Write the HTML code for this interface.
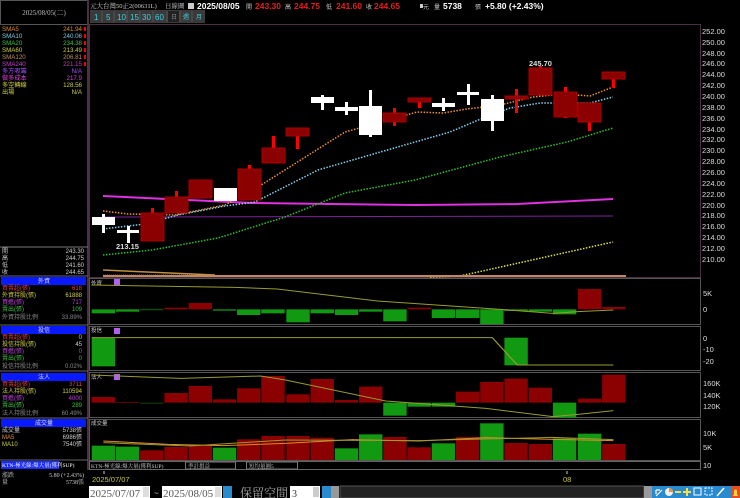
<!DOCTYPE html>
<html><head><meta charset="utf-8"><style>
html,body{margin:0;padding:0;background:#000;width:740px;height:498px;overflow:hidden}
svg{display:block}
text{font-family:"Liberation Sans","Noto Sans CJK TC",sans-serif}
.s{font-family:"Liberation Serif","Noto Serif CJK SC",serif}
</style></head><body>
<svg width="740" height="498" viewBox="0 0 740 498" xmlns="http://www.w3.org/2000/svg">
<rect width="740" height="498" fill="#000"/>
<rect x="0.5" y="0.5" width="87" height="24" fill="#000" stroke="#555"/>
<text x="44" y="15" font-size="7" fill="#bbb" text-anchor="middle" class="s">2025/08/05(二)</text>
<line x1="88" y1="0" x2="88" y2="470" stroke="#4a3040" stroke-width="2"/>
<g font-size="6.2" class="s">
<text x="2" y="31" fill="#e08a2a">SMA5</text><text x="82" y="31" fill="#e08a2a" text-anchor="end">241.94</text>
<text x="2" y="38" fill="#80c8e8">SMA10</text><text x="82" y="38" fill="#80c8e8" text-anchor="end">240.06</text>
<text x="2" y="45" fill="#40c040">SMA20</text><text x="82" y="45" fill="#40c040" text-anchor="end">234.38</text>
<text x="2" y="52" fill="#d0d040">SMA60</text><text x="82" y="52" fill="#d0d040" text-anchor="end">213.49</text>
<text x="2" y="59" fill="#c09060">SMA120</text><text x="82" y="59" fill="#c09060" text-anchor="end">206.81</text>
<text x="2" y="66" fill="#c040c0">SMA240</text><text x="82" y="66" fill="#c040c0" text-anchor="end">221.15</text>
<text x="2" y="73" fill="#a050ff">多方吸籌</text><text x="82" y="73" fill="#a050ff" text-anchor="end">N/A</text>
<text x="2" y="80" fill="#e040e0">做多成本</text><text x="82" y="80" fill="#e040e0" text-anchor="end">217.9</text>
<text x="2" y="87" fill="#d0d040">多空轉線</text><text x="82" y="87" fill="#d0d040" text-anchor="end">128.56</text>
<text x="2" y="94" fill="#d0d040">出場</text><text x="82" y="94" fill="#d0d040" text-anchor="end">N/A</text>
</g>
<g fill="#e00"><rect x="84" y="27" width="2" height="4"/><rect x="84" y="34" width="2" height="4"/><rect x="84" y="41" width="2" height="4"/><rect x="84" y="48" width="2" height="4"/><rect x="84" y="55" width="2" height="4"/><rect x="84" y="62" width="2" height="4"/></g>
<line x1="0" y1="247" x2="88" y2="247" stroke="#777"/>
<g font-size="6" fill="#ccc" class="s">
<text x="2" y="253">開</text><text x="84" y="253" text-anchor="end">243.30</text>
<text x="2" y="260">高</text><text x="84" y="260" text-anchor="end">244.75</text>
<text x="2" y="267">低</text><text x="84" y="267" text-anchor="end">241.60</text>
<text x="2" y="274">收</text><text x="84" y="274" text-anchor="end">244.65</text>
</g>
<g font-size="6" class="s">
<rect x="1" y="277" width="85" height="8" fill="#0a1aff"/><text x="44" y="283" fill="#ddd" text-anchor="middle">外資</text>
<text x="2" y="290" fill="#e04040">買賣超(張)</text><text x="82" y="290" fill="#e04040" text-anchor="end">618</text>
<text x="2" y="297" fill="#d0d040">外資持股(張)</text><text x="82" y="297" fill="#d0d040" text-anchor="end">61888</text>
<text x="2" y="304" fill="#c040e0">買進(張)</text><text x="82" y="304" fill="#c040e0" text-anchor="end">717</text>
<text x="2" y="311" fill="#40c040">賣出(張)</text><text x="82" y="311" fill="#40c040" text-anchor="end">109</text>
<text x="2" y="319" fill="#888">外資持股比例</text><text x="82" y="319" fill="#888" text-anchor="end">33.89%</text>
<rect x="1" y="326" width="85" height="8" fill="#0a1aff"/><text x="44" y="332" fill="#ddd" text-anchor="middle">投信</text>
<text x="2" y="339" fill="#e04040">買賣超(張)</text><text x="82" y="339" fill="#ccc" text-anchor="end">0</text>
<text x="2" y="346" fill="#d0d040">投信持股(張)</text><text x="82" y="346" fill="#ccc" text-anchor="end">45</text>
<text x="2" y="353" fill="#c040e0">買進(張)</text><text x="82" y="353" fill="#c040e0" text-anchor="end">0</text>
<text x="2" y="360" fill="#40c040">賣出(張)</text><text x="82" y="360" fill="#40c040" text-anchor="end">0</text>
<text x="2" y="368" fill="#888">投信持股比例</text><text x="82" y="368" fill="#888" text-anchor="end">0.02%</text>
<rect x="1" y="373" width="85" height="8" fill="#0a1aff"/><text x="44" y="379" fill="#ddd" text-anchor="middle">法人</text>
<text x="2" y="386" fill="#e04040">買賣超(張)</text><text x="82" y="386" fill="#e04040" text-anchor="end">3711</text>
<text x="2" y="393" fill="#d0d040">法人持股(張)</text><text x="82" y="393" fill="#d0d040" text-anchor="end">110594</text>
<text x="2" y="400" fill="#c040e0">買進(張)</text><text x="82" y="400" fill="#c040e0" text-anchor="end">4000</text>
<text x="2" y="407" fill="#40c040">賣出(張)</text><text x="82" y="407" fill="#40c040" text-anchor="end">289</text>
<text x="2" y="415" fill="#888">法人持股比例</text><text x="82" y="415" fill="#888" text-anchor="end">60.49%</text>
<rect x="1" y="419" width="85" height="8" fill="#0a1aff"/><text x="44" y="425" fill="#ddd" text-anchor="middle">成交量</text>
<text x="2" y="432" fill="#ccc">成交量</text><text x="82" y="432" fill="#ccc" text-anchor="end">5738張</text>
<text x="2" y="439" fill="#e08a2a">MA5</text><text x="82" y="439" fill="#ccc" text-anchor="end">6986張</text>
<text x="2" y="446" fill="#d0d040">MA10</text><text x="82" y="446" fill="#ccc" text-anchor="end">7540張</text>
</g>
<line x1="0" y1="276" x2="88" y2="276" stroke="#666"/>
<line x1="0" y1="325" x2="88" y2="325" stroke="#666"/>
<line x1="0" y1="371" x2="88" y2="371" stroke="#666"/>
<line x1="0" y1="418" x2="88" y2="418" stroke="#666"/>
<line x1="0" y1="460" x2="88" y2="460" stroke="#666"/>
<rect x="1" y="461" width="58" height="8" fill="#1a2aff"/>
<text x="2" y="467" font-size="5.5" fill="#fff" class="s">KTN-極光線:爆大量(獲利SUP)</text>
<text x="2" y="477" font-size="6" fill="#ccc" class="s">漲跌</text><text x="84" y="477" font-size="6" fill="#ccc" text-anchor="end" class="s">5.80 (+2.43%)</text>
<text x="2" y="484" font-size="6" fill="#ccc" class="s">量</text><text x="84" y="484" font-size="6" fill="#ccc" text-anchor="end" class="s">5738張</text>

<text x="90" y="8" font-size="6.5" fill="#ccc" class="s">元大台灣50正2(00631L)</text>
<text x="165" y="8" font-size="6.5" fill="#ccc" class="s">日線圖</text>
<rect x="188" y="3" width="6" height="6" fill="#ccc"/>
<g font-size="8.5" font-weight="bold">
<text x="197" y="9" fill="#fff">2025/08/05</text>
<text x="246" y="9" font-size="6" fill="#ccc" font-weight="normal">開</text><text x="255" y="9" fill="#e02020">243.30</text>
<text x="285" y="9" font-size="6" fill="#ccc" font-weight="normal">高</text><text x="294" y="9" fill="#e02020">244.75</text>
<text x="326" y="9" font-size="6" fill="#ccc" font-weight="normal">低</text><text x="336" y="9" fill="#e02020">241.60</text>
<text x="366" y="9" font-size="6" fill="#ccc" font-weight="normal">收</text><text x="374" y="9" fill="#e02020">244.65</text>
<text x="423" y="9" font-size="6" fill="#ccc" font-weight="normal">元</text>
<text x="434" y="9" font-size="6" fill="#ccc" font-weight="normal">量</text><text x="443" y="9" fill="#fff">5738</text>
<text x="475" y="9" font-size="6" fill="#ccc" font-weight="normal">張</text>
<text x="485" y="9" fill="#fff">+5.80 (+2.43%)</text>
</g>
<rect x="420" y="4" width="3" height="4" fill="#ccc"/>
<rect x="90" y="10" width="115" height="13" fill="#3a3a3a"/>
<g font-size="8" fill="#40d0e0">
<text x="94" y="20">1</text><text x="106" y="20">5</text><text x="117" y="20">10</text><text x="130" y="20">15</text><text x="142" y="20">30</text><text x="155" y="20">60</text>
</g>
<rect x="168" y="11" width="11" height="11" fill="#222"/>
<text x="171" y="19" font-size="6" fill="#888">日</text><text x="183" y="19" font-size="6" fill="#40d0e0">週</text><text x="196" y="19" font-size="6" fill="#40d0e0">月</text>
<g stroke="#555"><line x1="102" y1="11" x2="102" y2="22"/><line x1="114" y1="11" x2="114" y2="22"/><line x1="127" y1="11" x2="127" y2="22"/><line x1="140" y1="11" x2="140" y2="22"/><line x1="153" y1="11" x2="153" y2="22"/><line x1="167" y1="11" x2="167" y2="22"/><line x1="180" y1="11" x2="180" y2="22"/><line x1="192" y1="11" x2="192" y2="22"/></g>

<rect x="89.5" y="24.5" width="611" height="253" fill="none" stroke="#4a3040"/>
<g font-size="7.5" fill="#ddd">
<text x="702" y="34">252.00</text><text x="702" y="45">250.00</text><text x="702" y="56">248.00</text><text x="702" y="66">246.00</text><text x="702" y="77">244.00</text><text x="702" y="88">242.00</text><text x="702" y="99">240.00</text><text x="702" y="110">238.00</text><text x="702" y="121">236.00</text><text x="702" y="132">234.00</text><text x="702" y="142">232.00</text><text x="702" y="153">230.00</text><text x="702" y="164">228.00</text><text x="702" y="175">226.00</text><text x="702" y="186">224.00</text><text x="702" y="197">222.00</text><text x="702" y="208">220.00</text><text x="702" y="218">218.00</text><text x="702" y="229">216.00</text><text x="702" y="240">214.00</text><text x="702" y="251">212.00</text><text x="702" y="262">210.00</text>
</g>
<line x1="103" y1="217" x2="613" y2="216" stroke="#8020a0" stroke-width="1"/>
<polyline points="103,196 252,203 415,205 517,204 613,199" fill="none" stroke="#e030e0" stroke-width="2"/>
<polyline points="103,255 152,250 218,238 285,217 345,193 415,180 500,157 567,142 613,128" fill="none" stroke="#30c030" stroke-width="1.5" stroke-dasharray="1.5,1.5"/>
<polyline points="103,229 145,224 178,215 225,206 255,202 318,170 415,142 450,132 483,118 510,108 540,103 590,103 613,97" fill="none" stroke="#80d0f0" stroke-width="1.5" stroke-dasharray="1.5,1.5"/>
<polyline points="103,211 128,214 175,215 225,205 258,187 345,132 417,112 443,113 467,109 500,105 533,97 563,94 590,96 613,87" fill="none" stroke="#f09030" stroke-width="1.5" stroke-dasharray="1.5,1.5"/>
<polyline points="430,277 460,276 613,242" fill="none" stroke="#e0e040" stroke-width="1.5" stroke-dasharray="1.5,1.5"/>
<polyline points="103,270 215,275" fill="none" stroke="#c09040" stroke-width="1.5"/>
<line x1="103" y1="275.5" x2="200" y2="275.5" stroke="#e0c040" stroke-width="1.5" stroke-dasharray="1,1"/>
<line x1="103" y1="276" x2="626" y2="276" stroke="#c08860" stroke-width="2"/>
<g>
<g fill="#f00">
<rect x="151" y="208" width="3" height="5"/><rect x="175" y="191" width="3" height="6"/><rect x="248" y="165" width="3" height="4"/><rect x="272" y="136" width="3" height="12"/><rect x="296" y="136" width="3" height="13"/><rect x="393" y="108" width="3" height="18"/><rect x="418" y="98" width="3" height="10"/><rect x="515" y="89" width="3" height="24"/><rect x="539" y="66" width="3" height="3"/><rect x="564" y="87" width="3" height="31"/><rect x="588" y="122" width="3" height="9"/><rect x="612" y="79" width="3" height="9"/>
</g>
<g fill="#8b0000" stroke="#a00" stroke-width="1">
<rect x="141" y="213" width="23" height="28"/><rect x="165" y="197" width="23" height="16"/><rect x="189" y="180" width="23" height="18"/><rect x="238" y="169" width="23" height="31"/><rect x="262" y="148" width="23" height="15"/><rect x="286" y="128" width="23" height="8"/><rect x="383" y="113" width="23" height="9"/><rect x="408" y="98" width="23" height="4"/><rect x="505" y="96" width="23" height="3"/><rect x="529" y="68" width="23" height="27"/><rect x="554" y="92" width="23" height="25"/><rect x="578" y="103" width="23" height="19"/><rect x="602" y="72" width="23" height="7"/>
</g>
<g fill="#fff">
<rect x="102" y="214" width="3" height="19"/><rect x="92" y="217" width="23" height="8"/>
<rect x="127" y="226" width="3" height="17"/><rect x="117" y="230" width="22" height="3"/>
<rect x="214" y="188" width="23" height="13"/>
<rect x="321" y="95" width="3" height="15"/><rect x="311" y="97" width="23" height="6"/>
<rect x="345" y="102" width="3" height="13"/><rect x="335" y="107" width="23" height="4"/>
<rect x="369" y="90" width="3" height="47"/><rect x="359" y="106" width="23" height="29"/>
<rect x="442" y="98" width="3" height="13"/><rect x="432" y="103" width="23" height="4"/>
<rect x="467" y="84" width="3" height="21"/><rect x="457" y="92" width="22" height="3"/>
<rect x="491" y="95" width="3" height="36"/><rect x="481" y="99" width="23" height="22"/>
</g>
</g>
<text x="116" y="249" font-size="7.5" fill="#ddd" font-weight="bold">213.15</text>
<text x="529" y="66" font-size="7.5" fill="#ddd" font-weight="bold">245.70</text>

<g fill="none" stroke="#555">
<rect x="89.5" y="278.5" width="611" height="46"/>
<rect x="89.5" y="326.5" width="611" height="44"/>
<rect x="89.5" y="372.5" width="611" height="45"/>
<rect x="89.5" y="419.5" width="611" height="41"/>
</g>
<g font-size="5.5" fill="#ccc" class="s"><text x="91" y="285">外資</text><text x="91" y="332">投信</text><text x="91" y="379">法人</text><text x="91" y="425">成交量</text></g>
<g fill="#b060f0"><rect x="114" y="279" width="6" height="6"/><rect x="114" y="328" width="6" height="6"/><rect x="114" y="374" width="6" height="6"/></g>
<g font-size="7.5" fill="#ddd">
<text x="703" y="296">5K</text><text x="703" y="312">0</text>
<text x="703" y="341">0</text><text x="703" y="352">-10</text><text x="703" y="364">-20</text>
<text x="703" y="386">160K</text><text x="703" y="398">140K</text><text x="703" y="409">120K</text>
<text x="703" y="436">10K</text><text x="703" y="450">5K</text>
<text x="703" y="468">10</text>
</g>
<g transform="translate(85,275) scale(0.41773,0.33333)">
<g fill="#119911">
<rect x="16" y="103" width="56" height="12"/><rect x="74" y="103" width="56" height="7"/><rect x="306" y="103" width="56" height="4"/><rect x="364" y="103" width="56" height="17"/><rect x="422" y="103" width="56" height="12"/><rect x="482" y="103" width="56" height="39"/><rect x="540" y="103" width="56" height="12"/><rect x="598" y="103" width="56" height="17"/><rect x="656" y="103" width="56" height="7"/><rect x="714" y="103" width="56" height="36"/><rect x="830" y="103" width="56" height="26"/><rect x="888" y="103" width="56" height="26"/><rect x="946" y="103" width="56" height="44"/><rect x="1004" y="103" width="56" height="5"/><rect x="1062" y="103" width="56" height="7"/><rect x="1120" y="103" width="56" height="15"/>
</g>
<rect x="132" y="101" width="56" height="5" fill="#114411"/>
<g fill="#8b0000"><rect x="190" y="98" width="56" height="5"/><rect x="248" y="84" width="56" height="19"/><rect x="772" y="98" width="56" height="5"/><rect x="1180" y="42" width="56" height="61"/><rect x="1238" y="96" width="56" height="7"/></g>
<polyline points="16,30 360,37 460,42 700,78 960,100 1120,115 1180,110 1265,105" fill="none" stroke="#9a9a30" stroke-width="3"/>
<rect x="16" y="188" width="56" height="86" fill="#119911"/>
<rect x="1004" y="188" width="56" height="83" fill="#119911"/>
<polyline points="16,188 975,188 1035,270 1265,270" fill="none" stroke="#9a9a30" stroke-width="3"/>
<g fill="#8b0000"><rect x="16" y="366" width="56" height="17"/><rect x="74" y="381" width="56" height="2"/><rect x="190" y="354" width="56" height="29"/><rect x="248" y="333" width="56" height="50"/><rect x="306" y="373" width="56" height="10"/><rect x="364" y="340" width="56" height="43"/><rect x="422" y="303" width="56" height="80"/><rect x="482" y="358" width="56" height="25"/><rect x="540" y="312" width="56" height="71"/><rect x="598" y="375" width="56" height="8"/><rect x="656" y="335" width="56" height="48"/><rect x="888" y="350" width="56" height="33"/><rect x="946" y="321" width="56" height="62"/><rect x="1004" y="311" width="56" height="72"/><rect x="1062" y="338" width="56" height="45"/><rect x="1180" y="371" width="56" height="12"/><rect x="1238" y="299" width="56" height="84"/></g>
<g fill="#119911"><rect x="132" y="383" width="56" height="3" fill="#114411"/><rect x="714" y="383" width="56" height="39"/><rect x="772" y="383" width="56" height="12"/><rect x="830" y="383" width="56" height="12"/><rect x="1120" y="383" width="56" height="45"/></g>
<polyline points="16,300 230,310 420,303 480,315 720,378 960,400 1120,425 1180,418 1265,407" fill="none" stroke="#9a9a30" stroke-width="3"/>
<g fill="#119911"><rect x="16" y="512" width="56" height="43"/><rect x="74" y="515" width="56" height="40"/><rect x="306" y="518" width="56" height="37"/><rect x="598" y="520" width="56" height="35"/><rect x="656" y="478" width="56" height="77"/><rect x="830" y="505" width="56" height="50"/><rect x="946" y="445" width="56" height="110"/><rect x="1120" y="490" width="56" height="65"/><rect x="1180" y="476" width="56" height="79"/></g>
<g fill="#8b0000"><rect x="132" y="526" width="56" height="29"/><rect x="190" y="516" width="56" height="39"/><rect x="248" y="512" width="56" height="43"/><rect x="364" y="493" width="56" height="62"/><rect x="422" y="483" width="56" height="72"/><rect x="482" y="483" width="56" height="72"/><rect x="540" y="488" width="56" height="67"/><rect x="714" y="486" width="56" height="69"/><rect x="772" y="517" width="56" height="38"/><rect x="888" y="486" width="56" height="69"/><rect x="1004" y="504" width="56" height="51"/><rect x="1062" y="507" width="56" height="48"/><rect x="1238" y="507" width="56" height="48"/></g>
<polyline points="44,498 200,508 330,512 480,505 640,494 800,498 960,488 1120,493 1265,497" fill="none" stroke="#e08a2a" stroke-width="3"/>
<polyline points="44,503 250,513 480,495 800,497 1120,487 1265,494" fill="none" stroke="#9a9a30" stroke-width="3"/>
</g>
<rect x="89.5" y="461.5" width="611" height="8" fill="none" stroke="#666"/>
<text x="91" y="468" font-size="5.5" fill="#ccc" class="s">KTN-極光線:爆大量(獲利SUP)</text>
<rect x="185.5" y="462" width="50" height="7" fill="#000" stroke="#777"/><text x="188" y="468" font-size="5.5" fill="#ccc" class="s">季計損益</text>
<rect x="246.5" y="462" width="51" height="7" fill="#000" stroke="#777"/><text x="249" y="468" font-size="5.5" fill="#ccc" class="s">短均量圖5</text>
<line x1="104" y1="471" x2="104" y2="474" stroke="#ccc"/><line x1="567" y1="471" x2="567" y2="474" stroke="#ccc"/>
<text x="92" y="482" font-size="7.5" fill="#c8c840">2025/07/07</text>
<text x="563" y="482" font-size="7.5" fill="#c8c840">08</text>
<rect x="89" y="486" width="61" height="12" fill="#fff"/><text x="90" y="497" font-size="11" fill="#555" class="s">2025/07/07</text>
<rect x="143" y="487" width="6" height="10" fill="#ddd"/>
<text x="154" y="496" font-size="8" fill="#ccc">~</text>
<rect x="162" y="486" width="60" height="12" fill="#fff"/><text x="163" y="497" font-size="11" fill="#555" class="s">2025/08/05</text>
<rect x="215" y="487" width="6" height="10" fill="#ddd"/>
<rect x="223" y="486" width="9" height="12" fill="#2a8ad0"/>
<text x="240" y="497" font-size="12" fill="#aaa" class="s">保留空間</text>
<rect x="290" y="486" width="30" height="12" fill="#fff"/><text x="292" y="497" font-size="10" fill="#333" class="s">3</text>
<rect x="313" y="487" width="6" height="10" fill="#ccc"/>
<rect x="322" y="486" width="9" height="12" fill="#2a8ad0"/>
<rect x="331" y="486" width="8" height="12" fill="#999"/>
<rect x="340" y="486" width="304" height="12" fill="#222" stroke="#555"/>
<rect x="644" y="486" width="8" height="12" fill="#999"/>
<rect x="652" y="486" width="79" height="12" fill="#2a8ad0"/>
<path d="M656 496 L662 490 M656 490 h4 M656 490 v4" stroke="#fff" stroke-width="1.2" fill="none"/>
<circle cx="669" cy="492" r="4" fill="#eee"/><path d="M669 492 L669 488 A4 4 0 0 1 673 492 Z" fill="#f09030"/>
<rect x="675" y="491" width="6" height="2" fill="#ffe040"/>
<rect x="686" y="488" width="2" height="8" fill="#ffe040"/><rect x="683" y="491" width="8" height="2" fill="#ffe040"/>
<rect x="694" y="488" width="7" height="7" fill="none" stroke="#fff"/>
<rect x="705" y="488" width="7" height="7" fill="none" stroke="#fff" stroke-dasharray="2,1"/>
<path d="M717 496 L724 488" stroke="#fff" stroke-width="1.5"/>
<rect x="731" y="486" width="9" height="12" fill="#e05020"/>
<path d="M733 496 h5 l-1 -2 v-3 a1.5 1.5 0 0 0 -3 0 v3 z" fill="#ffd040"/>
</svg>
</body></html>
